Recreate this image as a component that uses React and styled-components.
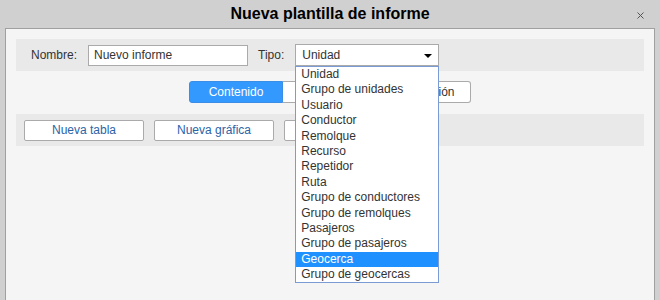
import React from "react";
import styled, { createGlobalStyle } from "styled-components";

const GlobalStyle = createGlobalStyle`
    html, body {
        margin: 0;
        padding: 0;
        background: #d0d0d0;
        font-family: "Liberation Sans", Arial, sans-serif;
        font-size: 12px;
        color: #333;
    }
`;

const Dialog = styled.div`
    width: 660px;
    height: 300px;
    display: flex;
    flex-direction: column;
    background: #d0d0d0;
    overflow: hidden;
`;

const TitleBar = styled.div`
    position: relative;
    height: 28px;
    flex-shrink: 0;
    display: flex;
    align-items: center;
    justify-content: center;
    & h1 {
        margin: 0;
        font-size: 16px;
        font-weight: bold;
        color: #000;
    }
`;

const Close = styled.svg`
    position: absolute;
    right: 16px;
    top: 12px;
    width: 7px;
    height: 7px;
`;

const Panel = styled.div`
    flex: 1;
    margin: 0 5px;
    padding: 10px;
    background: #f5f5f5;
    border: 1px solid #a0a0a0;
    border-bottom: none;
`;

const Band = styled.div`
    display: flex;
    align-items: center;
    height: 32px;
    padding-left: ${(p) => p.$pad}px;
    background: #e9e9e9;
    gap: ${(p) => p.$gap || 0}px;
`;

const Label = styled.label`
    margin-right: ${(p) => p.$mr}px;
    color: #333;
`;

const TextInput = styled.input`
    box-sizing: border-box;
    width: 160px;
    height: 21px;
    margin-right: 10px;
    padding: 0 5px;
    border: 1px solid #aaa;
    background: #fff;
    font-family: inherit;
    font-size: 12px;
    color: #333;
    outline: none;
`;

const SelectWrap = styled.div`
    position: relative;
    width: 144px;
`;

const SelectBox = styled.div`
    box-sizing: border-box;
    height: 22px;
    display: flex;
    align-items: center;
    padding-left: 6px;
    border: 1px solid #aaa;
    background: #fff;
    &::after {
        content: "";
        position: absolute;
        right: 7px;
        top: 10px;
        border-left: 4px solid transparent;
        border-right: 4px solid transparent;
        border-top: 4px solid #000;
    }
`;

const DropList = styled.ul`
    position: absolute;
    top: 22px;
    left: 0;
    width: 144px;
    box-sizing: border-box;
    margin: 0;
    padding: 0;
    list-style: none;
    background: #fff;
    border: 1px solid #7b9bd5;
    z-index: 5;
`;

const Option = styled.li`
    height: 15.4px;
    line-height: 15px;
    padding-left: 5px;
    white-space: nowrap;
    color: ${(p) => (p.$active ? "#fff" : "#333")};
    background: ${(p) => (p.$active ? "#1e90ff" : "transparent")};
`;

const Tabs = styled.div`
    display: flex;
    justify-content: center;
    margin: 10px 0 11px;
`;

const Tab = styled.div`
    box-sizing: border-box;
    width: 94px;
    height: 22px;
    display: flex;
    align-items: center;
    justify-content: center;
    background: ${(p) => (p.$active ? "#3399ff" : "#fff")};
    color: ${(p) => (p.$active ? "#fff" : "#333")};
    border: 1px solid ${(p) => (p.$active ? "#3a8ee6" : "#aaa")};
    border-left-width: ${(p) => (p.$first ? 1 : 0)}px;
    &:first-child {
        border-radius: 3px 0 0 3px;
    }
    &:last-child {
        border-radius: 0 3px 3px 0;
        padding-right: 8px;
    }
`;

const Button = styled.button`
    box-sizing: border-box;
    width: 120px;
    height: 21px;
    padding: 0;
    border: 1px solid #aaa;
    border-radius: 2px;
    background: #fff;
    font-family: inherit;
    font-size: 12px;
    color: #2a64a8;
`;

const types = [
    "Unidad",
    "Grupo de unidades",
    "Usuario",
    "Conductor",
    "Remolque",
    "Recurso",
    "Repetidor",
    "Ruta",
    "Grupo de conductores",
    "Grupo de remolques",
    "Pasajeros",
    "Grupo de pasajeros",
    "Geocerca",
    "Grupo de geocercas",
];

export default function App() {
    return (
        <Dialog>
            <GlobalStyle />
            <TitleBar>
                <h1>Nueva plantilla de informe</h1>
                <Close viewBox="0 0 7 7">
                    <path d="M0.5 0.5 L6.5 6.5 M6.5 0.5 L0.5 6.5" stroke="#555" strokeWidth="1" fill="none" />
                </Close>
            </TitleBar>
            <Panel>
                <Band $pad={15}>
                    <Label $mr={11}>Nombre:</Label>
                    <TextInput defaultValue="Nuevo informe" />
                    <Label $mr={11}>Tipo:</Label>
                    <SelectWrap>
                        <SelectBox>Unidad</SelectBox>
                        <DropList>
                            {types.map((t) => (
                                <Option key={t} $active={t === "Geocerca"}>{t}</Option>
                            ))}
                        </DropList>
                    </SelectWrap>
                </Band>
                <Tabs>
                    <Tab $active $first>Contenido</Tab>
                    <Tab>Parámetros</Tab>
                    <Tab>Presentación</Tab>
                </Tabs>
                <Band $pad={8} $gap={10}>
                    <Button>Nueva tabla</Button>
                    <Button>Nueva gráfica</Button>
                    <Button>Nuevo separador</Button>
                </Band>
            </Panel>
        </Dialog>
    );
}
